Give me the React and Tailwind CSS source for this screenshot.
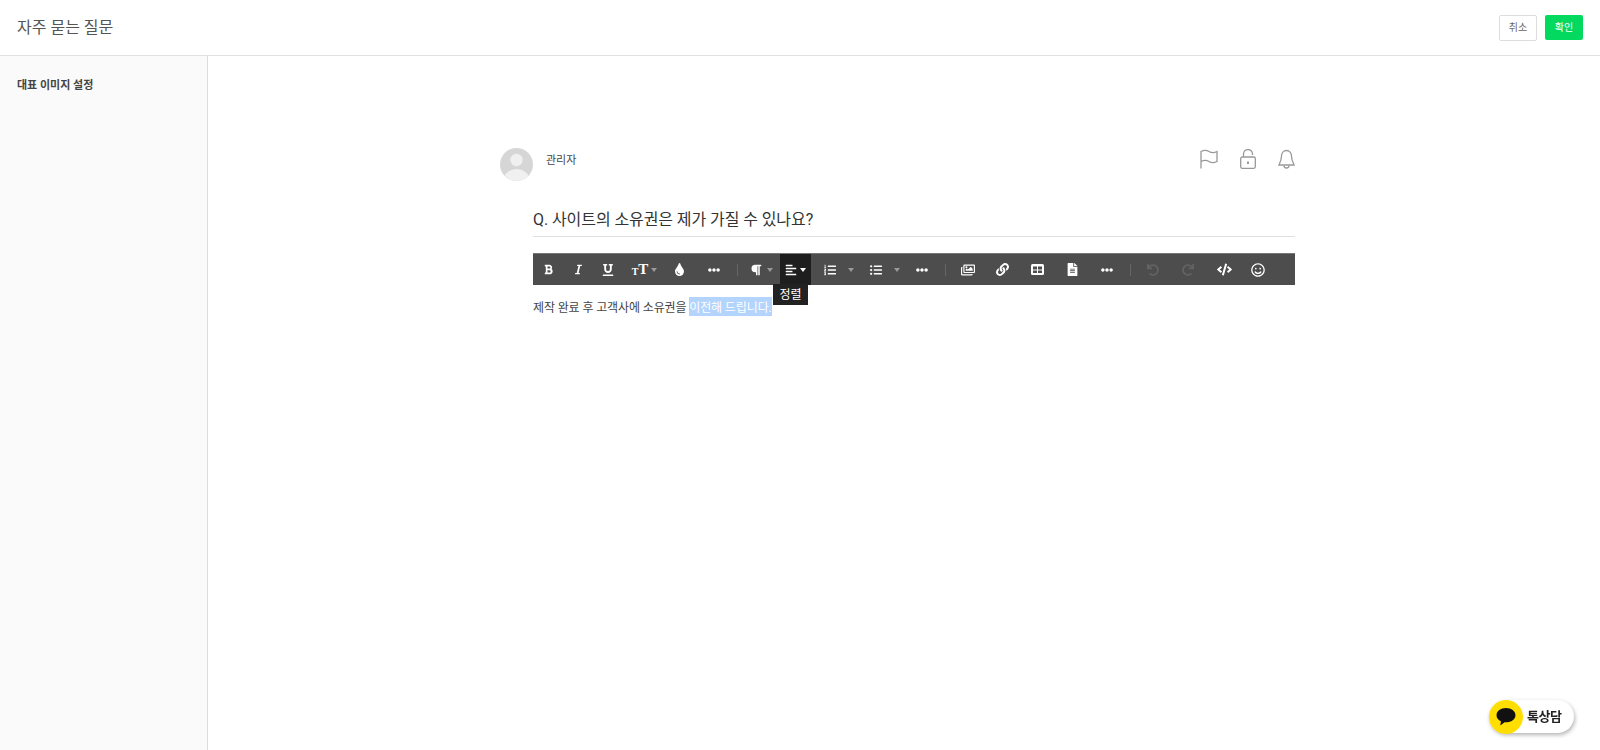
import {
  FaBold, FaItalic, FaUnderline, FaTint, FaEllipsisH, FaParagraph, FaAlignLeft,
  FaListOl, FaListUl, FaRegImages, FaLink, FaFileAlt, FaUndo, FaRedo, FaCode, FaRegSmile,
} from 'react-icons/fa';

const font = "font-['Roboto','Noto_Sans_CJK_KR',sans-serif]";

function Caret({ dim, className = 'ml-[5px]' }) {
  return <span className={`border-x-[3.5px] border-t-[4px] border-x-transparent ${className} ${dim ? 'border-t-[#999]' : 'border-t-white'}`} />;
}

function Tool({ w, children, active, disabled, className = 'justify-center' }) {
  return (
    <div className={`relative flex h-full items-center ${className} ${w} ${active ? 'bg-[#1e1e1e]' : ''} ${disabled ? 'text-[#636363]' : 'text-white'}`}>
      {children}
    </div>
  );
}

function Sep({ w }) {
  return (
    <div className={`flex justify-center ${w}`}>
      <div className="h-[12px] w-px bg-[#666]" />
    </div>
  );
}

function TableIcon() {
  return (
    <svg width="13" height="11" viewBox="0 0 13 11">
      <rect width="13" height="11" rx="1.500" fill="#fff" />
      <rect x="2" y="2.500" width="4" height="3" fill="#4d4d4d" />
      <rect x="7" y="2.500" width="4" height="3" fill="#4d4d4d" />
      <rect x="2" y="6.500" width="4" height="2.500" fill="#4d4d4d" />
      <rect x="7" y="6.500" width="4" height="2.500" fill="#4d4d4d" />
    </svg>
  );
}

function Toolbar() {
  return (
    <div className="mt-[16px] flex h-[32px] items-center border-t border-[#777] bg-[#4d4d4d]">
      <Tool w="w-[30px]"><FaBold size={11} /></Tool>
      <Tool w="w-[30px]"><FaItalic size={11} /></Tool>
      <Tool w="w-[30px]"><FaUnderline size={12} /></Tool>
      <Tool w="w-[42px]" className="justify-center pl-[1px]">
        <span className="flex items-end font-['Liberation_Serif',serif] font-bold leading-none">
          <span className="text-[10px]">T</span>
          <span className="text-[15px]">T</span>
        </span>
        <Caret dim className="ml-[3px]" />
      </Tool>
      <Tool w="w-[29px]"><FaTint size={13} /></Tool>
      <Tool w="w-[40px]"><FaEllipsisH size={12} /></Tool>
      <Sep w="w-[6px]" />
      <Tool w="w-[40px]" className="justify-center pl-[3px]"><FaParagraph size={12} /><Caret dim /></Tool>
      <Tool w="w-[31px]" active>
        <FaAlignLeft size={12} /><Caret className="ml-[3px]" />
        <div className={`absolute left-[-7px] top-[30px] flex h-[21px] w-[35px] items-center justify-center bg-[#222] text-[12px] text-white ${font}`}>정렬</div>
      </Tool>
      <Tool w="w-[46px]" className="justify-start pl-[13px]"><FaListOl size={12} /><Caret dim className="ml-[12px]" /></Tool>
      <Tool w="w-[46px]" className="justify-start pl-[13px]"><FaListUl size={12} /><Caret dim className="ml-[12px]" /></Tool>
      <Tool w="w-[37px]"><FaEllipsisH size={12} /></Tool>
      <Sep w="w-[10px]" />
      <Tool w="w-[36px]"><FaRegImages size={14} /></Tool>
      <Tool w="w-[32px]"><FaLink size={13} /></Tool>
      <Tool w="w-[38px]"><TableIcon /></Tool>
      <Tool w="w-[33px]"><FaFileAlt size={13} /></Tool>
      <Tool w="w-[36px]"><FaEllipsisH size={12} /></Tool>
      <Sep w="w-[11px]" />
      <Tool w="w-[34px]" disabled><FaUndo size={12} /></Tool>
      <Tool w="w-[36px]" disabled><FaRedo size={12} /></Tool>
      <Tool w="w-[37px]"><FaCode size={15} /></Tool>
      <Tool w="w-[30px]"><FaRegSmile size={14} /></Tool>
    </div>
  );
}

export default function App() {
  return (
    <div className={`flex h-[750px] flex-col overflow-hidden bg-white ${font}`}>
      <header className="flex h-[56px] shrink-0 items-center justify-between border-b border-[#e0e0e0] px-[17px]">
        <h1 className="text-[16px] font-normal text-[#555]">자주 묻는 질문</h1>
        <div className="flex items-center gap-[8px]">
          <button className="h-[26px] w-[38px] rounded-[2px] border border-[#ddd] bg-white text-[10px] text-[#666]">취소</button>
          <button className="h-[25px] w-[38px] rounded-[2px] bg-[#03d85f] text-[10px] text-white">확인</button>
        </div>
      </header>

      <div className="flex min-h-0 flex-1">
        <aside className="w-[208px] shrink-0 border-r border-[#ddd] bg-[#fafafa] pl-[17px] pt-[22px]">
          <div className="text-[11px] font-bold leading-[16px] text-[#444]">대표 이미지 설정</div>
        </aside>

        <main className="flex-1 pl-[292px] pt-[92px]">
          <div className="w-[795px]">
            <div className="flex items-start justify-between">
              <div className="flex items-start">
                <svg width="33" height="33" viewBox="0 0 33 33">
                  <defs><clipPath id="avatar"><circle cx="16.5" cy="16.5" r="16.5" /></clipPath></defs>
                  <g clipPath="url(#avatar)">
                    <rect width="33" height="33" fill="#d6d6d6" />
                    <circle cx="16.5" cy="12" r="6.200" fill="#f0f0f0" />
                    <ellipse cx="16.5" cy="31" rx="12.500" ry="10" fill="#f0f0f0" />
                  </g>
                </svg>
                <span className="ml-[13px] mt-[5px] text-[11px] leading-[16px] text-[#444]">관리자</span>
              </div>
              <div className="mt-[1px] flex gap-[22px]">
                <svg width="18" height="20" viewBox="0 0 18 20" fill="none" stroke="#999" strokeWidth="1.300">
                  <path d="M1 19.500V2.500c3-1.500 5.500-1.500 8 0s5 1.500 8 0v10c-3 1.500-5.500 1.500-8 0s-5-1.500-8 0" />
                </svg>
                <svg width="16" height="20" viewBox="0 0 16 20" fill="none" stroke="#999" strokeWidth="1.300">
                  <rect x="0.700" y="8" width="14.600" height="11.300" rx="1.500" />
                  <path d="M3.500 8V5a4.500 4.500 0 0 1 9 0v1" />
                  <path d="M8 12.500v2.500" strokeWidth="2" />
                </svg>
                <svg width="17" height="20" viewBox="0 0 17 20" fill="none" stroke="#999" strokeWidth="1.300">
                  <path d="M8.500 1.500c-3 0-5 2.500-5 5.500 0 4-1 6-2.500 9h15c-1.500-3-2.500-5-2.500-9 0-3-2-5.500-5-5.500z" />
                  <path d="M6 16.500a2.500 2.500 0 0 0 5 0" />
                </svg>
              </div>
            </div>

            <div className="ml-[33px]">
              <div className="mt-[26px] border-b border-[#e0e0e0] pb-[3px] text-[16px] leading-[26px] tracking-[-0.08px] text-[#333]">
                Q. 사이트의 소유권은 제가 가질 수 있나요?
              </div>
              <Toolbar />
              <p className="mt-[14px] text-[12px] leading-[19px] tracking-[-0.12px] text-[#444]">
                제작 완료 후 고객사에 소유권을 <span className="bg-[#b3d4fc] pb-[1px] pt-[4px] text-white">이전해 드립니다.</span>
              </p>
            </div>
          </div>
        </main>
      </div>

      <div className="fixed bottom-[17px] left-[1489px] flex h-[33px] w-[85px] items-center rounded-full bg-white shadow-[1px_2px_4px_rgba(0,0,0,0.3)]">
        <span className="flex h-[34px] w-[34px] shrink-0 items-center justify-center rounded-full bg-[#ffde00]">
          <svg width="22" height="20" viewBox="0 0 20 19">
            <path d="M10 1C4.900 1 1 4 1 7.800c0 2.500 1.600 4.600 4.200 5.800L4.600 17.500l4-3c.5.100.9.100 1.400.100 5.100 0 9-3 9-6.800S15.100 1 10 1z" fill="#111" />
          </svg>
        </span>
        <span className="ml-[4px] text-[13px] font-bold tracking-[-0.5px] text-[#222]">톡상담</span>
      </div>
    </div>
  );
}
